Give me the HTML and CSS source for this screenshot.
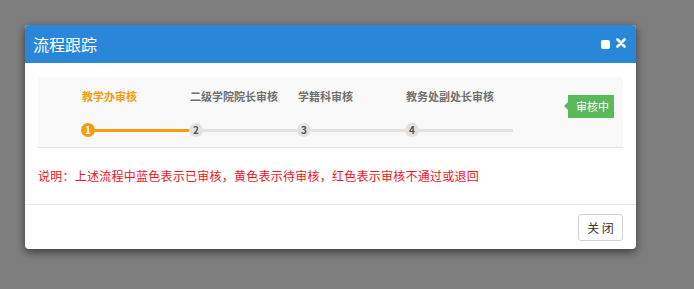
FILE: index.html
```html
<!DOCTYPE html>
<html lang="zh-CN">
<head>
  <meta charset="UTF-8">
  <title>流程跟踪</title>
  <link rel="stylesheet" href="styles.css">
</head>
<body>

<div class="modal">
  <div class="modal-header">
    <span class="modal-title">流程跟踪</span>
    <div class="tools">
      <span class="tool-max"></span>
      <svg class="tool-close" width="10" height="10" viewBox="0 0 10 10">
        <path d="M1.5 1.5 L8.5 8.5 M8.5 1.5 L1.5 8.5" stroke="#fff" stroke-width="2.6" stroke-linecap="round"/>
      </svg>
    </div>
  </div>

  <div class="modal-body">
    <div class="flow">
      <div class="steps">
        <div class="step current">
          <div class="step-name">教学办审核</div>
          <div class="track"><span class="dot">1</span><span class="line"></span></div>
        </div>
        <div class="step">
          <div class="step-name">二级学院院长审核</div>
          <div class="track"><span class="dot">2</span><span class="line"></span></div>
        </div>
        <div class="step">
          <div class="step-name">学籍科审核</div>
          <div class="track"><span class="dot">3</span><span class="line"></span></div>
        </div>
        <div class="step">
          <div class="step-name">教务处副处长审核</div>
          <div class="track"><span class="dot">4</span><span class="line"></span></div>
        </div>
      </div>
      <div class="status">审核中</div>
    </div>
    <p class="note">说明：上述流程中蓝色表示已审核，黄色表示待审核，红色表示审核不通过或退回</p>
  </div>

  <div class="modal-footer">
    <button class="btn">关 闭</button>
  </div>
</div>

</body>
</html>
```

FILE: styles.css
```css
* {
  margin: 0;
  padding: 0;
  box-sizing: border-box;
}

body {
  font-family: "Noto Sans CJK SC", "Noto Sans", sans-serif;
  background: #7e7e7e;
  width: 694px;
  height: 289px;
  overflow: hidden;
}

.modal {
  margin: 25px 0 0 25px;
  width: 611px;
  background: #fff;
  border-radius: 4px;
  box-shadow: 0 3px 8px rgba(0, 0, 0, 0.55);
  overflow: hidden;
}

.modal-header {
  height: 38px;
  background: #2a86d9;
  display: flex;
  align-items: center;
  padding: 0 10px 0 8px;
}

.modal-title {
  color: #fff;
  font-size: 16px;
  flex: 1;
}

.tools {
  display: flex;
  align-items: center;
  gap: 6px;
  margin-top: -2px;
}

.tool-max {
  width: 9px;
  height: 9px;
  background: #fff;
  border-radius: 2px;
  margin-top: 3px;
}

.tool-close {
  display: block;
}

.modal-body {
  padding: 14px 13px 0 13px;
  height: 142px;
  border-bottom: 1px solid #e8e8e8;
}

.flow {
  height: 71px;
  background: #f9f9f9;
  border-bottom: 1px solid #e3e3e3;
  display: flex;
  align-items: flex-start;
  padding: 12px 9px 0 43px;
}

.steps {
  display: flex;
}

.step {
  width: 108px;
}

.step-name {
  font-size: 11px;
  font-weight: bold;
  color: #707070;
  line-height: 14px;
  padding-left: 1px;
}

.step.current .step-name {
  color: #f39c11;
}

.track {
  display: flex;
  align-items: center;
  margin-top: 20px;
}

.dot {
  width: 14px;
  height: 14px;
  border-radius: 50%;
  background: #e2e2e2;
  color: #555;
  font-size: 10px;
  font-weight: bold;
  line-height: 14px;
  text-align: center;
  flex: none;
}

.line {
  flex: 1;
  height: 3px;
  background: #e2e2e2;
}

.step.current .dot,
.step.current .line {
  background: #f39c11;
  color: #fff;
}

.status {
  margin-left: auto;
  margin-top: 6px;
  position: relative;
  background: #5cb85c;
  color: #fff;
  font-size: 11px;
  height: 23px;
  line-height: 23px;
  padding: 0 5px 0 8px;
}

.status::before {
  content: "";
  position: absolute;
  left: -4px;
  top: 7px;
  border-top: 4px solid transparent;
  border-bottom: 4px solid transparent;
  border-right: 4px solid #5cb85c;
}

.note {
  margin-top: 20px;
  font-size: 12px;
  letter-spacing: 0.25px;
  color: #f0141e;
  line-height: 16px;
}

.modal-footer {
  display: flex;
  justify-content: flex-end;
  padding: 9px 13px 8px 13px;
}

.btn {
  width: 45px;
  height: 27px;
  font-family: inherit;
  font-size: 12px;
  color: #333;
  background: #fff;
  border: 1px solid #d2d2d2;
  border-radius: 3px;
}
```
